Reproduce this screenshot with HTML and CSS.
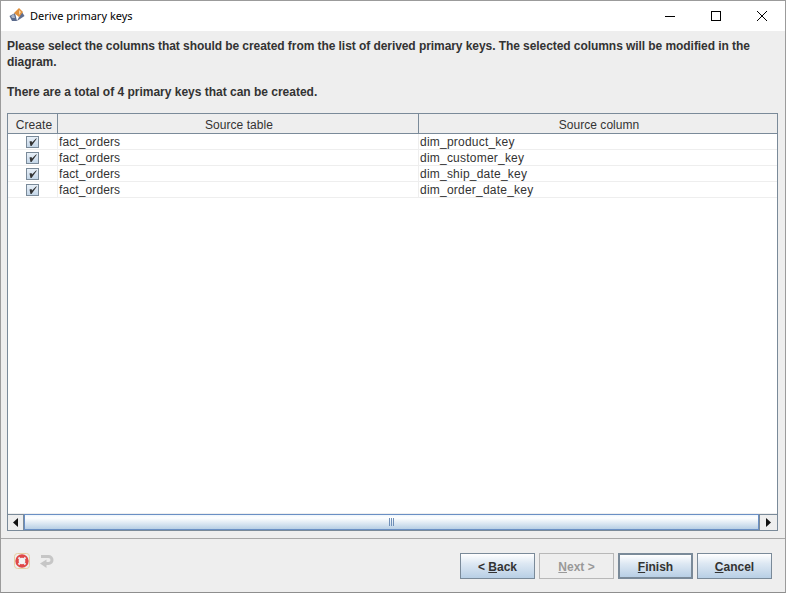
FILE: index.html
```html
<!DOCTYPE html>
<html lang="en">
<head>
<meta charset="utf-8">
<title>Derive primary keys</title>
<link rel="stylesheet" href="styles.css">
</head>
<body>
<div class="window">
  <header class="titlebar">
    <svg class="appicon" width="16" height="16" viewBox="0 0 16 16">
      <path d="M0.500 9 L6 6 L8 14 L3 14 Z" fill="#5a6a8c"/>
      <path d="M8 14 L15.500 9 L13 5 L10 10 Z" fill="#5f6d8e"/>
      <path d="M5 6 L10 1 L14 5 L10 10 Z" fill="#e0903c"/>
      <path d="M10 3 L12 5 L10 8 Z" fill="#f4d6a8"/>
      <path d="M2 9 L5 7 L6 11 L3 11 Z" fill="#a9b4c8"/>
    </svg>
    <span class="title">Derive primary keys</span>
    <div class="winctrls">
      <svg class="winbtn" width="10" height="10" viewBox="0 0 10 10"><path d="M0 5.500H10" stroke="#000" fill="none"/></svg>
      <svg class="winbtn" width="10" height="10" viewBox="0 0 10 10"><rect x="0.500" y="0.500" width="9" height="9" stroke="#000" fill="none"/></svg>
      <svg class="winbtn" width="10" height="10" viewBox="0 0 10 10"><path d="M0 0L10 10M10 0L0 10" stroke="#000" fill="none"/></svg>
    </div>
  </header>
  <main class="content">
    <div class="message">
      <p class="msg-line">Please select the columns that should be created from the list of derived primary keys. The selected columns will be modified in the diagram.</p>
      <p class="msg-line msg-total">There are a total of 4 primary keys that can be created.</p>
    </div>
    <section class="tablebox">
      <div class="viewport">
        <div class="row head">
          <div class="hcell c1">Create</div>
          <div class="hcell c2">Source table</div>
          <div class="hcell c3">Source column</div>
        </div>
        <div class="row body"><div class="cell c1"><svg class="check" width="13" height="12" viewBox="0 0 11 10"><path d="M2.500 4.500L4.500 4L5 5.500L9.500 1L9.500 2L4.500 9L3.500 9Z"/></svg></div><div class="cell c2">fact_orders</div><div class="cell c3">dim_product_key</div></div>
        <div class="row body"><div class="cell c1"><svg class="check" width="13" height="12" viewBox="0 0 11 10"><path d="M2.500 4.500L4.500 4L5 5.500L9.500 1L9.500 2L4.500 9L3.500 9Z"/></svg></div><div class="cell c2">fact_orders</div><div class="cell c3">dim_customer_key</div></div>
        <div class="row body"><div class="cell c1"><svg class="check" width="13" height="12" viewBox="0 0 11 10"><path d="M2.500 4.500L4.500 4L5 5.500L9.500 1L9.500 2L4.500 9L3.500 9Z"/></svg></div><div class="cell c2">fact_orders</div><div class="cell c3">dim_ship_date_key</div></div>
        <div class="row body"><div class="cell c1"><svg class="check" width="13" height="12" viewBox="0 0 11 10"><path d="M2.500 4.500L4.500 4L5 5.500L9.500 1L9.500 2L4.500 9L3.500 9Z"/></svg></div><div class="cell c2">fact_orders</div><div class="cell c3">dim_order_date_key</div></div>
      </div>
      <div class="scrollbar">
        <div class="arrow left"><svg width="5" height="9" viewBox="0 0 5 9"><path d="M5 0V9L0 4.500Z" fill="#111"/></svg></div>
        <div class="thumb"><span class="grip"></span></div>
        <div class="arrow right"><svg width="5" height="9" viewBox="0 0 5 9"><path d="M0 0V9L5 4.500Z" fill="#111"/></svg></div>
      </div>
    </section>
  </main>
  <footer class="footer">
    <div class="tools">
      <svg width="16" height="16" viewBox="0 0 16 16">
        <rect x="0.500" y="0.500" width="15" height="15" rx="3" fill="none" stroke="#e6cfa0"/>
        <circle cx="8" cy="8" r="5" fill="#f4f4f4" stroke="#e04848" stroke-width="3.400"/>
        <path d="M4.500 4.500L6 6M11.500 4.500L10 6M4.500 11.500L6 10M11.500 11.500L10 10" stroke="#e8eaf0" stroke-width="2"/>
      </svg>
      <svg width="16" height="16" viewBox="0 0 16 16">
        <path d="M2 3.500H9.500A3.500 3.500 0 0 1 9.500 10.500H7" fill="none" stroke="#c6c6c6" stroke-width="3"/>
        <path d="M7.500 6.500V15L1 10.500Z" fill="#c6c6c6"/>
      </svg>
    </div>
    <div class="buttons">
      <button class="btn" type="button">&lt; <u>B</u>ack</button>
      <button class="btn disabled" type="button"><u>N</u>ext &gt;</button>
      <button class="btn default" type="button"><u>F</u>inish</button>
      <button class="btn cancel" type="button"><u>C</u>ancel</button>
    </div>
  </footer>
</div>
</body>
</html>
```
FILE: styles.css
```css
* { box-sizing: border-box; }
html, body { margin: 0; padding: 0; }
body { width: 786px; height: 593px; overflow: hidden; font-family: "Liberation Sans", Arial, sans-serif; }
.window {
  width: 786px; height: 593px; display: flex; flex-direction: column;
  background: #eeeeee; border: 1px solid #9b9b9b; border-bottom-color: #8e8e8e;
}
.titlebar { height: 30px; flex: none; background: #fff; display: flex; align-items: center; padding-left: 8px; }
.appicon { flex: none; margin-bottom: 2px; }
.title { margin-left: 5px; padding-bottom: 2px; font-family: "Noto Sans", "Open Sans", sans-serif; font-size: 11px; color: #000; }
.winctrls { margin-left: auto; display: flex; }
.winbtn { box-sizing: content-box; padding: 0 18px; }
.content { flex: none; display: flex; flex-direction: column; padding: 0 7px 0 6px; }
.message { height: 82px; flex: none; padding-top: 7px; font-weight: bold; font-size: 12px; line-height: 16px; color: #333; letter-spacing: -0.066px; }
.msg-line { margin: 0 0 14px; }
.msg-total { letter-spacing: -0.01px; }
.tablebox { flex: none; height: 418px; border: 1px solid #7a8a99; background: #fff; display: flex; flex-direction: column; }
.viewport { flex: 1; min-height: 0; }
.row { display: grid; grid-template-columns: 50px 361px 1fr; }
.head { height: 20px; background: #eeeeee; border-bottom: 1px solid #7a8a99; }
.hcell { font-size: 12px; line-height: 22px; color: #333; text-align: center; border-right: 1px solid #7a8a99; letter-spacing: 0.05px; padding-left: 2px; }
.hcell.c1 { padding-left: 3px; }
.hcell.c3 { border-right: 0; }
.body { height: 16px; border-bottom: 1px solid #eeeeee; }
.cell { font-size: 12px; line-height: 16px; color: #333; padding-left: 1px; border-right: 1px solid #eeeeee; white-space: nowrap; letter-spacing: 0.22px; }
.cell.c2 { letter-spacing: 0.1px; }
.cell.c3 { border-right: 0; }
.cell.c1 { display: flex; align-items: flex-start; justify-content: center; padding: 2px 0 0 0; }
.check {
  display: block; border: 1px solid #7a8a99;
  background: linear-gradient(#e8f0f8, #c4d6e8); fill: #333;
}
.scrollbar { height: 17px; flex: none; display: flex; border-top: 1px solid #eeeeee; background: #eeeeee; }
.arrow { width: 16px; flex: none; display: flex; align-items: center; justify-content: center; background: #eeeeee; border-right: 1px solid #7a8a99; border-top: 1px solid #7a8a99; }
.arrow.right { width: 18px; border-right: 0; border-left: 1px solid #7a8a99; }
.thumb {
  flex: 1; display: flex; align-items: center; justify-content: center;
  border: 1px solid #6a8fc4; background: linear-gradient(#eef5fb, #ffffff 20%, #b8cfe5);
}
.grip { width: 5px; height: 8px; border-left: 1px solid #6f8fb8; border-right: 1px solid #6f8fb8; }
.grip::before { content: ""; display: block; width: 1px; height: 8px; margin-left: 1px; background: #6f8fb8; }
.footer { flex: 1; min-height: 0; margin-top: 7px; border-top: 1px solid #a8a8a8; display: flex; justify-content: space-between; padding: 13px 13px 0 13px; }
.tools { display: flex; gap: 9px; height: 16px; margin-top: 1px; }
.buttons { display: flex; gap: 4px; height: 26px; margin-top: 1px; }
.btn {
  width: 75px; height: 26px; padding: 2px 0 0; border: 1px solid #7a8a99;
  background: linear-gradient(#ffffff, #dde8f3 40%, #b8cfe5);
  font-family: "Liberation Sans", Arial, sans-serif; font-weight: bold; font-size: 12px; color: #333;
}
.btn.disabled { background: #eeeeee; border-color: #b8b8b8; color: #999; }
.btn.default { border: 2px solid #7a8a99; }
```
